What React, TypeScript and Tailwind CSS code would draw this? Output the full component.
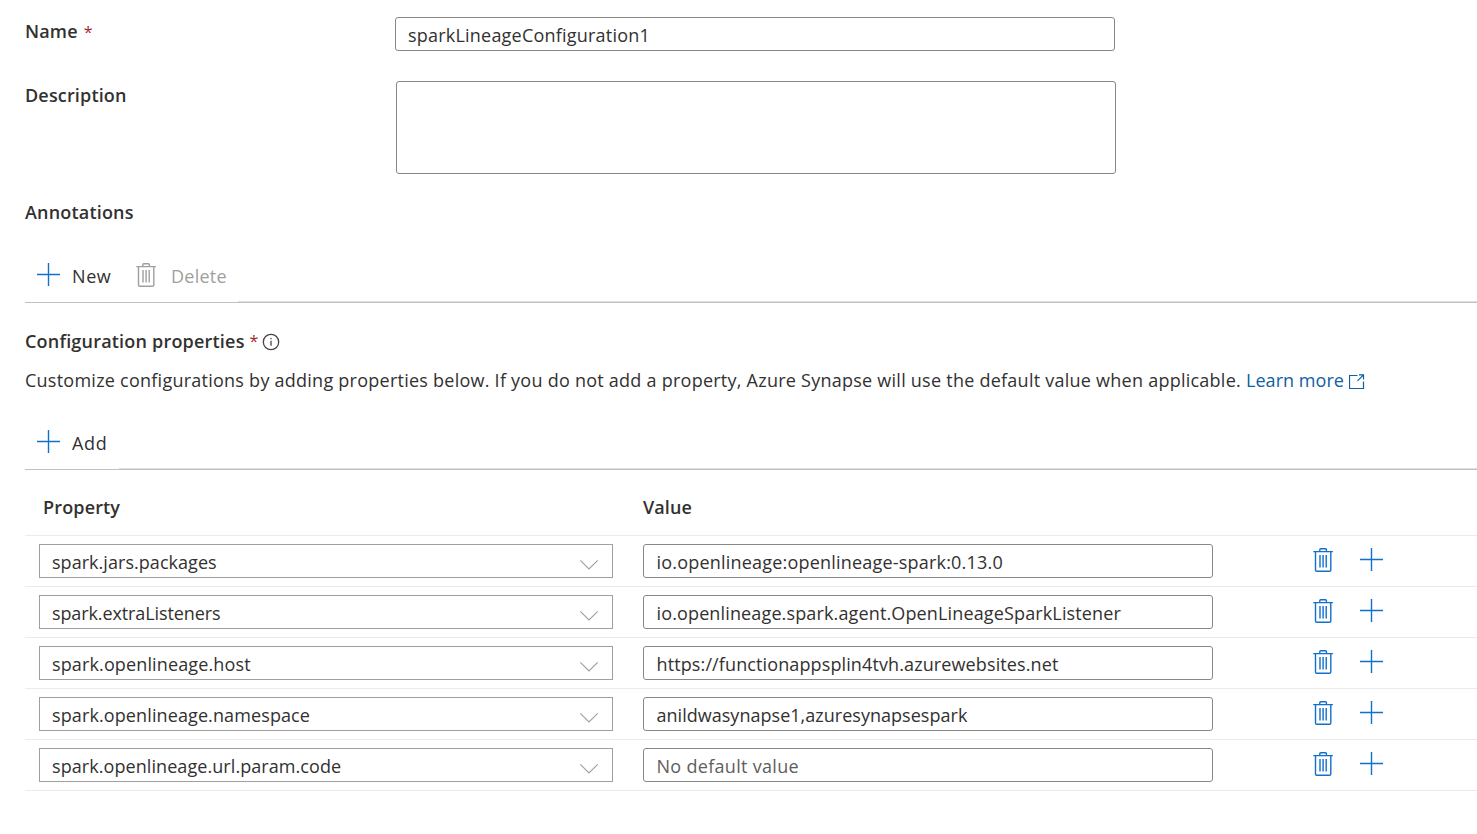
import type { ReactNode } from "react";

function Plus({ className = "" }: { className?: string }) {
  return (
    <svg className={`shrink-0 text-[#1070cc] ${className}`} width="24" height="24" viewBox="0 0 24 24" fill="none" stroke="currentColor" strokeWidth="1.4">
      <path d="M0 11.5H23M11.5 0V23" />
    </svg>
  );
}

function Trash({ className }: { className: string }) {
  return (
    <svg className={`shrink-0 ${className}`} width="20" height="24" viewBox="0 0 20 24" fill="none" stroke="currentColor" strokeWidth="1.4">
      <path d="M0.3 3.6H19.9M6.8 3.6V1.6Q6.8 0.7 7.7 0.7H12.5Q13.4 0.7 13.4 1.6V3.6" />
      <path d="M2.5 3.6V22Q2.5 23.3 3.8 23.3H16.5Q17.8 23.3 17.8 22V3.6" />
      <path d="M7 7V19.6M10.1 7V19.6M13.2 7V19.6" />
    </svg>
  );
}

function Chevron() {
  return (
    <svg width="20" height="12" viewBox="0 0 20 12" fill="none" stroke="#a19f9d" strokeWidth="1.1" className="mt-[5px] shrink-0">
      <path d="M1.3 1.3L10 10L18.7 1.3" />
    </svg>
  );
}

function Label({ children, className = "" }: { children: ReactNode; className?: string }) {
  return <span className={`font-semibold text-[#323130] ${className}`}>{children}</span>;
}

const rows = [
  { name: "spark.jars.packages", nameTrack: "tracking-[0.04px]", value: "io.openlineage:openlineage-spark:0.13.0", valueTrack: "tracking-[0.2px]" },
  { name: "spark.extraListeners", nameTrack: "tracking-[-0.11px]", value: "io.openlineage.spark.agent.OpenLineageSparkListener", valueTrack: "tracking-[0.137px]" },
  { name: "spark.openlineage.host", nameTrack: "tracking-[0.13px]", value: "https://functionappsplin4tvh.azurewebsites.net", valueTrack: "tracking-[0.115px]" },
  { name: "spark.openlineage.namespace", nameTrack: "tracking-[0.11px]", value: "anildwasynapse1,azuresynapsespark", valueTrack: "tracking-[0.025px]" },
  { name: "spark.openlineage.url.param.code", nameTrack: "tracking-[0.07px]", value: "", valueTrack: "tracking-[0.3px]" },
];

export default function App() {
  return (
    <div className="h-[834px] w-full overflow-hidden bg-white pl-[25px] font-['Open_Sans',sans-serif] text-[18px] leading-[30px] whitespace-nowrap text-[#323130]">
      <div className="flex h-[80px] items-start">
        <div className="w-[370px] pt-4">
          <Label className="tracking-[0.15px]">Name</Label>
          <span className="ml-1.5 text-[16px] text-[#a4262c]">*</span>
        </div>
        <div className="mt-[17px] flex h-[34px] w-[720px] items-center rounded-[3px] border border-[#8a8886] pt-0.5 pl-3 tracking-[0.213px]">
          sparkLineageConfiguration1
        </div>
      </div>

      <div className="flex h-[117px] items-start">
        <Label className="w-[371px] tracking-[0.16px]">Description</Label>
        <div className="mt-px h-[93px] w-[720px] rounded-[3px] border border-[#8a8886]" />
      </div>

      <div className="flex h-[54px] items-start">
        <Label className="tracking-[0.18px]">Annotations</Label>
      </div>

      <div className="flex h-[52px]">
        <div className="flex h-full w-[213px] items-start border-b border-[#c1c1c1] pt-2.5 pl-3">
          <Plus className="mt-0.5" />
          <span className="ml-[11px] w-[40px] tracking-[0.6px]">New</span>
          <Trash className="mt-0.5 ml-6 text-[#a19f9d]" />
          <span className="ml-[15px] tracking-[0.25px] text-[#a19f9d]">Delete</span>
        </div>
        <div className="flex-1 border-b border-[#c1c1c1]">
          <div className="h-full border-b border-[#dedede]" />
        </div>
      </div>

      <div className="mt-[23px] flex h-[30px] items-center">
        <Label className="tracking-[0.2px]">Configuration properties</Label>
        <span className="ml-[5px] w-[8px] text-[16px] text-[#a4262c]">*</span>
        <svg className="mt-0.5 ml-[4px]" width="18" height="18" viewBox="0 0 18 18" fill="none" stroke="#484644" strokeWidth="1.3">
          <circle cx="9" cy="9" r="7.7" />
          <path d="M9 7.8V12.8M9 5V6.3" />
        </svg>
      </div>

      <div className="mt-[9px] flex h-[30px] items-center">
        <span className="tracking-[0.246px]">
          Customize configurations by adding properties below. If you do not add a property, Azure Synapse will use the default value when applicable.
        </span>
        <span className="ml-[5px] tracking-[0.047px] text-[#115ea3]">Learn more</span>
        <svg className="mt-[3px] ml-[5px]" width="16" height="16" viewBox="0 0 16 16" fill="none" stroke="#115ea3" strokeWidth="1.2">
          <path d="M8.5 1.5H0.5V14.5H14.5V7.5M10 0.9H14.5V5.5M14.3 1.1L8.5 6.9" />
        </svg>
      </div>

      <div className="mt-[23px] flex h-[52px]">
        <div className="flex w-[94px] items-start border-b border-[#c1c1c1] pt-2.5 pl-3">
          <Plus className="mt-0.5" />
          <span className="ml-[11px] tracking-[0.7px]">Add</span>
        </div>
        <div className="flex-1 border-b border-[#c1c1c1]">
          <div className="h-full border-b border-[#dedede]" />
        </div>
      </div>

      <div className="flex h-[66px] items-start border-b border-[#edebe9] pt-[22px] pl-[18px]">
        <Label className="w-[600px] tracking-[0.15px]">Property</Label>
        <Label className="tracking-[0.104px]">Value</Label>
      </div>

      {rows.map((row) => (
        <div key={row.name} className="flex h-[51px] items-start border-b border-[#edebe9] pt-2 pl-[14px]">
          <div className="flex h-[34px] w-[574px] items-center justify-between border border-[#a19f9d] pt-0.5 pr-[13px] pl-3">
            <span className={row.nameTrack}>{row.name}</span>
            <Chevron />
          </div>
          <div className={`ml-[30px] flex h-[34px] w-[570px] items-center rounded-[3px] border border-[#8a8886] pt-0.5 pl-[12.5px] ${row.valueTrack}`}>
            {row.value || <span className="text-[#605e5c]">No default value</span>}
          </div>
          <Trash className="mt-1 ml-[100px] text-[#1070cc]" />
          <Plus className="mt-1 ml-[27px]" />
        </div>
      ))}
    </div>
  );
}
